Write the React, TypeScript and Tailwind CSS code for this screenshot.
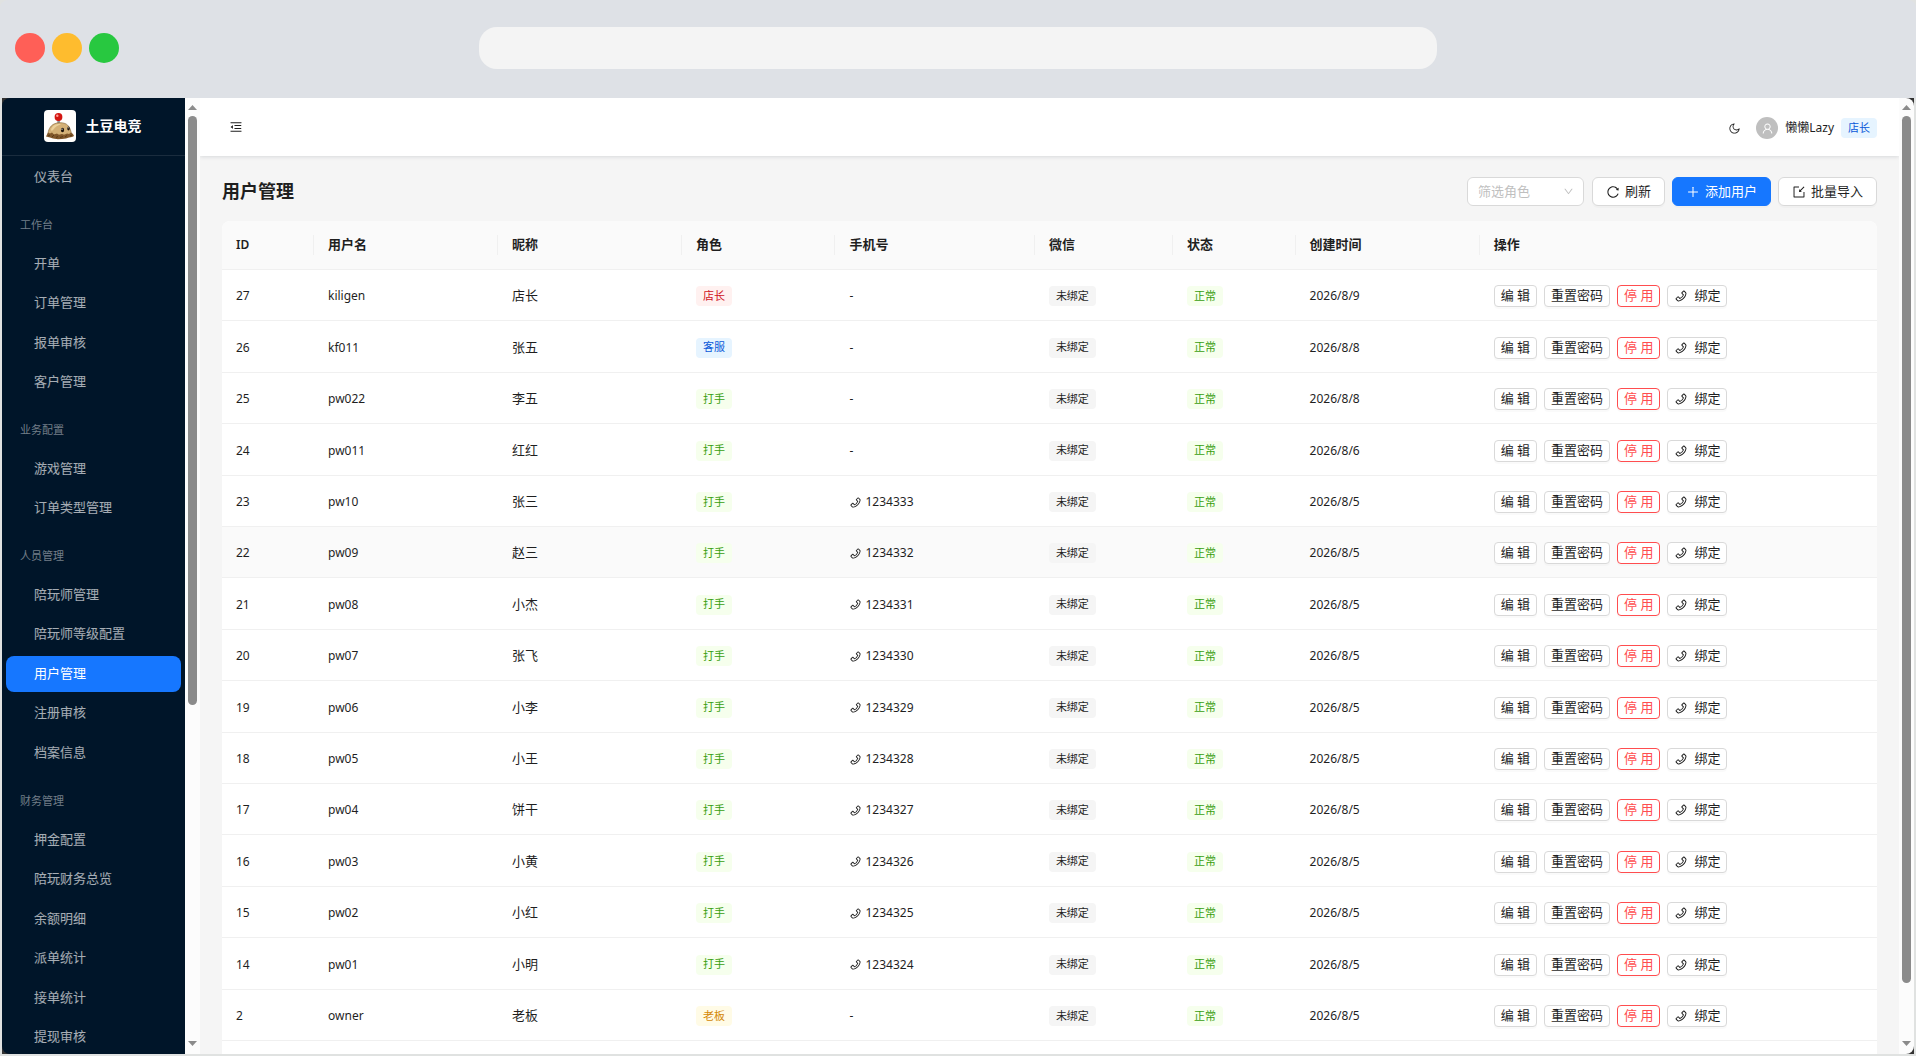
import React from "react";
import {
  AiOutlineDown,
  AiOutlineImport,
  AiOutlineMenuFold,
  AiOutlineMoon,
  AiOutlinePhone,
  AiOutlinePlus,
  AiOutlineReload,
  AiOutlineUser,
} from "react-icons/ai";

type TagColor = "red" | "blue" | "green" | "gold" | "gray";

interface User {
  id: number;
  username: string;
  nickname: string;
  role: string;
  phone?: string;
  createdAt: string;
}

interface MenuGroup {
  title: string;
  items: string[];
}

const menuGroups: MenuGroup[] = [
  { title: "工作台", items: ["开单", "订单管理", "报单审核", "客户管理"] },
  { title: "业务配置", items: ["游戏管理", "订单类型管理"] },
  {
    title: "人员管理",
    items: ["陪玩师管理", "陪玩师等级配置", "用户管理", "注册审核", "档案信息"],
  },
  {
    title: "财务管理",
    items: [
      "押金配置",
      "陪玩财务总览",
      "余额明细",
      "派单统计",
      "接单统计",
      "提现审核",
    ],
  },
];

const users: User[] = [
  { id: 27, username: "kiligen", nickname: "店长", role: "店长", createdAt: "2026/8/9" },
  { id: 26, username: "kf011", nickname: "张五", role: "客服", createdAt: "2026/8/8" },
  { id: 25, username: "pw022", nickname: "李五", role: "打手", createdAt: "2026/8/8" },
  { id: 24, username: "pw011", nickname: "红红", role: "打手", createdAt: "2026/8/6" },
  { id: 23, username: "pw10", nickname: "张三", role: "打手", phone: "1234333", createdAt: "2026/8/5" },
  { id: 22, username: "pw09", nickname: "赵三", role: "打手", phone: "1234332", createdAt: "2026/8/5" },
  { id: 21, username: "pw08", nickname: "小杰", role: "打手", phone: "1234331", createdAt: "2026/8/5" },
  { id: 20, username: "pw07", nickname: "张飞", role: "打手", phone: "1234330", createdAt: "2026/8/5" },
  { id: 19, username: "pw06", nickname: "小李", role: "打手", phone: "1234329", createdAt: "2026/8/5" },
  { id: 18, username: "pw05", nickname: "小王", role: "打手", phone: "1234328", createdAt: "2026/8/5" },
  { id: 17, username: "pw04", nickname: "饼干", role: "打手", phone: "1234327", createdAt: "2026/8/5" },
  { id: 16, username: "pw03", nickname: "小黄", role: "打手", phone: "1234326", createdAt: "2026/8/5" },
  { id: 15, username: "pw02", nickname: "小红", role: "打手", phone: "1234325", createdAt: "2026/8/5" },
  { id: 14, username: "pw01", nickname: "小明", role: "打手", phone: "1234324", createdAt: "2026/8/5" },
  { id: 2, username: "owner", nickname: "老板", role: "老板", createdAt: "2026/8/5" },
];

// Column widths are relative, the fixed table layout scales them to the page
const columns = [
  { title: "ID", width: "w-[60px]" },
  { title: "用户名", width: "w-[120px]" },
  { title: "昵称", width: "w-[120px]" },
  { title: "角色", width: "w-[100px]" },
  { title: "手机号", width: "w-[130px]" },
  { title: "微信", width: "w-[90px]" },
  { title: "状态", width: "w-[80px]" },
  { title: "创建时间", width: "w-[120px]" },
  { title: "操作", width: "w-[259px]" },
];

const tagColors: Record<TagColor, string> = {
  red: "bg-[#fff1f0] text-[#cf1322]",
  blue: "bg-[#e6f4ff] text-[#0958d9]",
  green: "bg-[#f6ffed] text-[#389e0d]",
  gold: "bg-[#fffbe6] text-[#d48806]",
  gray: "bg-[#f5f5f5] text-[#1f1f1f]",
};

const roleColors: Record<string, TagColor> = {
  店长: "red",
  客服: "blue",
  打手: "green",
  老板: "gold",
};

function Tag({ color, children }: { color: TagColor; children: React.ReactNode }) {
  return (
    <span
      className={`inline-flex h-5 items-center rounded px-[7px] text-[11px] whitespace-nowrap ${tagColors[color]}`}
    >
      {children}
    </span>
  );
}

function SmallButton({
  danger,
  children,
}: {
  danger?: boolean;
  children: React.ReactNode;
}) {
  return (
    <button
      type="button"
      className={`flex h-[22px] items-center justify-center gap-[6px] rounded border bg-white px-[6px] whitespace-nowrap shadow-[0_2px_0_rgba(0,0,0,0.02)] ${
        danger ? "border-[#ff4d4f] text-[#ff4d4f]" : "border-[#d9d9d9]"
      }`}
    >
      {children}
    </button>
  );
}

function ScrollBar({ thumb }: { thumb: string }) {
  return (
    <div className="flex w-[15px] shrink-0 flex-col items-center justify-between bg-[#fcfcfc] pt-[7px] pb-2">
      <svg width="9" height="5" viewBox="0 0 9 5" fill="#8b8b8b">
        <path d="M4.5 0 9 5H0z" />
      </svg>
      <div className="mt-[6px] flex w-[9px] flex-1 flex-col">
        <div className={`rounded-full bg-[#8b8b8b] ${thumb}`} />
      </div>
      <svg width="9" height="5" viewBox="0 0 9 5" fill="#8b8b8b">
        <path d="M4.5 5 0 0h9z" />
      </svg>
    </div>
  );
}

function Logo() {
  return (
    <svg width="32" height="32" viewBox="0 0 32 32" className="rounded">
      <rect width="32" height="32" fill="#fffefc" />
      <path d="M13.300 10h2.600v4h-2.600z" fill="#8d8d93" />
      <circle cx="14.500" cy="7" r="3.900" fill="#d3150f" />
      <circle cx="13.300" cy="5.700" r="1.200" fill="#ff9d94" />
      <path
        d="M4 25c0-5 2-9 6-11 3-1.500 8-1.800 11-.5 4 1.500 6 6 6.500 11.500z"
        fill="#d3b076"
        stroke="#7d6032"
        strokeWidth="0.6"
      />
      <path d="M7 20c1-4 4-6 8-6 1 0 2 .3 2 .6-3 .6-6 2.400-8 5.400-.6 1-2 1-2 0z" fill="#ead09a" />
      <path
        d="M2 26.500l2-4 2 1 2-1 2 2 3-1 2 1.500 3-1 2 1 3-1.500 2 .5 2-1.500 2 1.500 1 2-2 1-3 .6-3 1-4 .4-4 .2-5-.6-3-1z"
        fill="#80572a"
      />
      <path
        d="M4 26l2-1M8 27l2-2M12 27.500l2-1M16 27.500l3-1M21 27l2-1.500M26 26l2-1"
        stroke="#4e3213"
        strokeWidth="0.8"
      />
      <ellipse cx="18.500" cy="20" rx="1.600" ry="2.200" fill="#1c130b" />
      <ellipse cx="24.500" cy="18.500" rx="1.200" ry="1.900" fill="#1c130b" />
      <circle cx="18" cy="19.200" r="0.600" fill="#fff" />
      <circle cx="24.200" cy="17.700" r="0.500" fill="#fff" />
    </svg>
  );
}

function WindowBar() {
  return (
    <div className="flex h-[98px] shrink-0 rounded-t-lg bg-[#dee1e6] pt-[27px]">
      <div className="flex w-1/4 gap-[7px] pt-[6px] pl-[15px]">
        <span className="size-[30px] rounded-full bg-[#ff5f57]" />
        <span className="size-[30px] rounded-full bg-[#febc2e]" />
        <span className="size-[30px] rounded-full bg-[#28c840]" />
      </div>
      <div className="h-[42px] w-1/2 rounded-[18px] bg-[#f4f4f4]" />
    </div>
  );
}

function Sidebar() {
  return (
    <aside className="w-[183px] shrink-0 overflow-hidden bg-[#001529] text-[13px]">
      <div className="flex h-[58px] items-start justify-center gap-[10px] border-b border-white/10 pt-3 pr-[2px]">
        <Logo />
        <span className="text-sm leading-8 font-bold text-white">土豆电竞</span>
      </div>
      <nav className="px-1 pt-[3px] text-white/65">
        <a href="#dashboard" className="flex h-9 items-center rounded-lg pl-7">
          仪表台
        </a>
        {menuGroups.map((group) => (
          <div key={group.title}>
            <h2 className="pt-5 pb-[7px] pl-[14px] text-[11px] leading-5 text-white/45">
              {group.title}
            </h2>
            <ul>
              {group.items.map((item) => (
                <li key={item} className="mt-1 even:mt-[3px]">
                  <a
                    href="#menu"
                    className={`flex h-9 items-center rounded-lg pl-7 ${
                      item === "用户管理" ? "bg-[#1677ff] text-white" : ""
                    }`}
                  >
                    {item}
                  </a>
                </li>
              ))}
            </ul>
          </div>
        ))}
      </nav>
    </aside>
  );
}

function Header() {
  return (
    <header className="relative flex h-[58px] shrink-0 items-center justify-between bg-white pr-[22px] pl-[29px] shadow-[0_1px_4px_rgba(0,21,41,0.12)]">
      <button type="button" aria-label="收起菜单">
        <AiOutlineMenuFold size={14} />
      </button>
      <div className="flex items-center gap-[7px] pt-[2px]">
        <button type="button" aria-label="深色模式" className="mr-2">
          <AiOutlineMoon size={13} />
        </button>
        <span className="flex size-[22px] items-center justify-center rounded-full bg-[#bfbfbf] text-white">
          <AiOutlineUser size={13} />
        </span>
        <span className="text-xs">懒懒Lazy</span>
        <Tag color="blue">店长</Tag>
      </div>
    </header>
  );
}

function Toolbar() {
  const buttonClass =
    "flex h-[29px] items-center gap-[5px] rounded-md border px-[13px] shadow-[0_2px_0_rgba(0,0,0,0.02)]";

  return (
    <div className="flex items-center justify-between">
      <h1 className="text-lg leading-[29px] font-bold">用户管理</h1>
      <div className="flex items-center gap-[7px]">
        <div className="relative mr-px flex w-[117px] items-center">
          <select
            aria-label="筛选角色"
            defaultValue=""
            className="h-[29px] w-full appearance-none rounded-md border border-[#d9d9d9] bg-white pl-[10px] text-[#bfbfbf]"
          >
            <option value="">筛选角色</option>
            <option value="owner">老板</option>
            <option value="manager">店长</option>
            <option value="service">客服</option>
            <option value="player">打手</option>
          </select>
          <AiOutlineDown
            size={11}
            className="pointer-events-none absolute right-[10px] text-[#bfbfbf]"
          />
        </div>
        <button type="button" className={`${buttonClass} border-[#d9d9d9] bg-white`}>
          <AiOutlineReload size={14} />
          刷新
        </button>
        <button type="button" className={`${buttonClass} border-[#1677ff] bg-[#1677ff] text-white`}>
          <AiOutlinePlus size={14} />
          添加用户
        </button>
        <button type="button" className={`${buttonClass} border-[#d9d9d9] bg-white`}>
          <AiOutlineImport size={14} />
          批量导入
        </button>
      </div>
    </div>
  );
}

function UserTable() {
  return (
    <table className="mt-[15px] w-full table-fixed border-separate border-spacing-0 rounded-t-lg bg-white text-left">
      <thead>
        <tr className="h-[49px]">
          {columns.map((column, index) => (
            <th
              key={column.title}
              className={`border-b border-[#f0f0f0] bg-[#fafafa] p-0 font-semibold first:rounded-tl-lg last:rounded-tr-lg ${column.width}`}
            >
              <div
                className={`flex h-5 items-center px-[14px] ${
                  index !== columns.length - 1 ? "border-r border-[#f0f0f0]" : ""
                } ${index === 0 ? "text-xs" : ""}`}
              >
                {column.title}
              </div>
            </th>
          ))}
        </tr>
      </thead>
      <tbody className="[&_td]:border-b [&_td]:border-[#f0f0f0] [&_td]:px-[14px] [&_td]:pt-[2px] [&_td]:pb-0">
        {users.map((user) => (
          <tr
            key={user.id}
            className={`h-[51px] nth-[5n+2]:h-[52px] nth-[5n+4]:h-[52px] ${
              user.id === 22 ? "bg-[#fafafa]" : ""
            }`}
          >
            <td className="text-xs">{user.id}</td>
            <td className="text-xs">{user.username}</td>
            <td>{user.nickname}</td>
            <td>
              <div className="flex">
                <Tag color={roleColors[user.role]}>{user.role}</Tag>
              </div>
            </td>
            <td className="text-xs">
              {user.phone ? (
                <span className="flex items-center gap-[3px]">
                  <AiOutlinePhone size={13} />
                  {user.phone}
                </span>
              ) : (
                "-"
              )}
            </td>
            <td>
              <div className="flex">
                <Tag color="gray">未绑定</Tag>
              </div>
            </td>
            <td>
              <div className="flex">
                <Tag color="green">正常</Tag>
              </div>
            </td>
            <td className="text-xs">{user.createdAt}</td>
            <td>
              <div className="flex gap-[7px]">
                <SmallButton>编 辑</SmallButton>
                <SmallButton>重置密码</SmallButton>
                <SmallButton danger>停 用</SmallButton>
                <SmallButton>
                  <AiOutlinePhone size={14} />
                  绑定
                </SmallButton>
              </div>
            </td>
          </tr>
        ))}
        <tr className="h-[51px]">
          <td colSpan={9} />
        </tr>
      </tbody>
    </table>
  );
}

function App() {
  return (
    <div className="flex h-screen flex-col overflow-hidden bg-[#e0e2e1] font-['Noto_Sans','Noto_Sans_CJK_SC',sans-serif] text-[13px] text-[#1f1f1f]">
      <WindowBar />
      <div className="mx-[2px] mb-[2px] flex min-h-0 flex-1 bg-[#333333]">
        <div className="flex min-w-0 flex-1 overflow-hidden rounded-lg">
          <Sidebar />
          <ScrollBar thumb="h-7/11" />
          <div className="flex min-w-0 flex-1 flex-col overflow-hidden bg-[#f5f5f5]">
            <Header />
            <main className="min-h-0 flex-1 px-[22px] pt-[21px]">
              <Toolbar />
              <UserTable />
            </main>
          </div>
          <ScrollBar thumb="h-15/16" />
        </div>
      </div>
    </div>
  );
}

export default App;
